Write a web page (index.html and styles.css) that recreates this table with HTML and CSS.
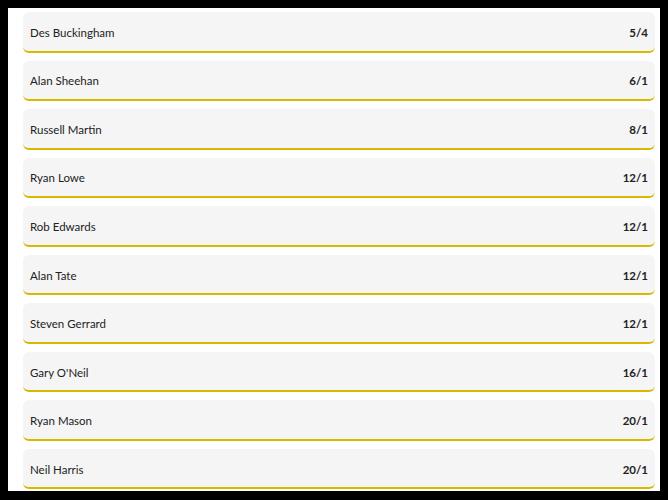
FILE: index.html
```html
<!DOCTYPE html>
<html>
<head>
<meta charset="utf-8">
<link rel="stylesheet" href="styles.css">
</head>
<body>
<div class="frame">
  <ul class="list">
    <li class="row"><span class="name">Des Buckingham</span><span class="odds">5/4</span></li>
    <li class="row"><span class="name">Alan Sheehan</span><span class="odds">6/1</span></li>
    <li class="row"><span class="name">Russell Martin</span><span class="odds">8/1</span></li>
    <li class="row"><span class="name">Ryan Lowe</span><span class="odds">12/1</span></li>
    <li class="row"><span class="name">Rob Edwards</span><span class="odds">12/1</span></li>
    <li class="row"><span class="name">Alan Tate</span><span class="odds">12/1</span></li>
    <li class="row"><span class="name">Steven Gerrard</span><span class="odds">12/1</span></li>
    <li class="row"><span class="name">Gary O'Neil</span><span class="odds">16/1</span></li>
    <li class="row"><span class="name">Ryan Mason</span><span class="odds">20/1</span></li>
    <li class="row"><span class="name">Neil Harris</span><span class="odds">20/1</span></li>
  </ul>
</div>
</body>
</html>
```
FILE: styles.css
```css
html, body {
  margin: 0;
  padding: 0;
  background: #000;
  height: 100%;
}
body {
  padding: 8px 8px 9px 8px;
  box-sizing: border-box;
  font-family: Lato, "Open Sans", sans-serif;
  overflow: hidden;
}
.frame {
  background: #fff;
  width: 652px;
  height: 483px;
  overflow: hidden;
  box-sizing: border-box;
  padding: 4px 5px 0 15px;
}
.list {
  list-style: none;
  margin: 0;
  padding: 0;
  display: flex;
  flex-direction: column;
  gap: 8px;
}
.row {
  display: flex;
  justify-content: space-between;
  align-items: center;
  height: 40.56px;
  box-sizing: border-box;
  background: #f5f5f5;
  border-bottom: 2px solid #d8b800;
  border-radius: 6px;
  padding: 2px 7px 0 7px;
  font-size: 11.5px;
  color: #222;
}
.name {
  font-weight: 400;
}
.odds {
  font-weight: 700;
}
```
